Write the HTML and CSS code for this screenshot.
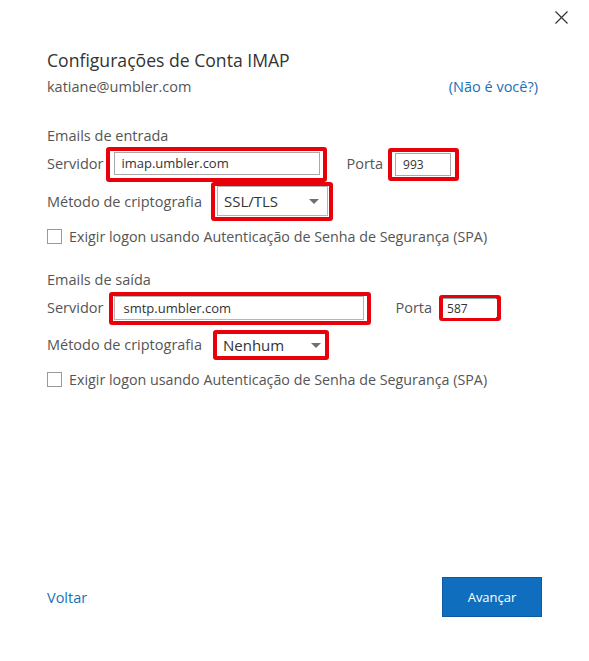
FILE: index.html
```html
<!DOCTYPE html>
<html lang="pt">
<head>
<meta charset="utf-8">
<title>Configurações de Conta IMAP</title>
<link rel="stylesheet" href="styles.css">
</head>
<body>
<div class="dialog">
  <div class="topbar">
    <button class="close" aria-label="Fechar">
      <svg width="13" height="13" viewBox="0 0 13 13"><path d="M0.5 0.5L12.5 12.5M12.5 0.5L0.5 12.5" stroke="#333" stroke-width="1.2" fill="none"/></svg>
    </button>
  </div>
  <div class="content">
    <h1 class="title">Configurações de Conta IMAP</h1>
    <div class="account">
      <span class="email">katiane@umbler.com</span>
      <a class="link" href="#">(Não é você?)</a>
    </div>

    <section class="group g1">
      <div class="group-title">Emails de entrada</div>
      <div class="row server-row">
        <span class="label">Servidor</span>
        <div class="hl hl-server1"><div class="input in-server1">imap.umbler.com</div></div>
        <span class="label porta p1">Porta</span>
        <div class="hl hl-port1"><div class="input in-port1">993</div></div>
      </div>
      <div class="row crypt-row">
        <span class="label">Método de criptografia</span>
        <div class="hl hl-select"><div class="select sel1"><span>SSL/TLS</span><span class="arrow"></span></div></div>
      </div>
      <label class="check-row">
        <span class="checkbox"></span>
        <span class="check-text">Exigir logon usando Autenticação de Senha de Segurança (SPA)</span>
      </label>
    </section>

    <section class="group g2">
      <div class="group-title">Emails de saída</div>
      <div class="row server-row">
        <span class="label">Servidor</span>
        <div class="hl hl-server2"><div class="input in-server2">smtp.umbler.com</div></div>
        <span class="label porta p2">Porta</span>
        <div class="hl hl-port2"><div class="input in-port2">587</div></div>
      </div>
      <div class="row crypt-row crypt2">
        <span class="label">Método de criptografia</span>
        <div class="hl hl-select2"><div class="select sel2"><span>Nenhum</span><span class="arrow"></span></div></div>
      </div>
      <label class="check-row">
        <span class="checkbox"></span>
        <span class="check-text">Exigir logon usando Autenticação de Senha de Segurança (SPA)</span>
      </label>
    </section>
  </div>
  <div class="footer">
    <a class="link back" href="#">Voltar</a>
    <button class="primary">Avançar</button>
  </div>
</div>
</body>
</html>
```

FILE: styles.css
```css
* { box-sizing: border-box; }
html, body { margin: 0; padding: 0; background: #fff; }
body {
  font-family: "Open Sans", "Noto Sans", "Liberation Sans", sans-serif;
  color: #444;
  width: 589px;
  height: 661px;
  overflow: hidden;
}
.dialog { height: 661px; display: flex; flex-direction: column; }
.topbar { height: 38px; display: flex; justify-content: flex-end; align-items: flex-start; padding: 11px 21px 0 0; }
.close { border: 0; background: none; padding: 0; width: 13px; height: 13px; display: block; cursor: pointer; }
.close svg { display: block; }

.content { padding: 0 51px 0 47px; flex: 1; }
.title { margin: 10px 0 0; font-size: 17.6px; font-weight: 400; color: #333; line-height: 24px; }
.account { display: flex; justify-content: space-between; margin-top: 5px; line-height: 20px; font-size: 14.5px; }
.email { color: #555; }
.link { color: #1b6fb8; text-decoration: none; }

.group-title { font-size: 14.5px; color: #555; line-height: 20px; }
.g1 { margin-top: 29px; }
.g2 { margin-top: 19px; }
.row { display: flex; align-items: center; }
.label { font-size: 14.5px; color: #555; line-height: 20px; }

.hl { border: 4px solid #e8000b; border-radius: 3px; display: flex; align-items: center; }
.input { border: 1px solid #a9a9a9; background: #fff; color: #333; display: flex; align-items: center; }

.server-row { height: 36px; }
.hl-server1 { margin-left: 3px; width: 221px; height: 35px; padding: 1px 3px 3px 4px; }
.in-server1 { width: 206px; height: 23px; font-size: 13px; padding-left: 6px; }
.p1 { margin-left: 19px; }
.hl-port1 { margin-left: 5px; width: 71px; height: 33px; padding: 1px 4px 1px 3px; }
.in-port1 { width: 56px; height: 23px; font-size: 12px; padding-left: 7px; }

.hl-server2 { margin-left: 6px; width: 262px; height: 33px; padding: 0 3px 1px 1px; }
.in-server2 { width: 254px; height: 24px; font-size: 13px; padding-left: 8px; border-color: #b5b5b5; }
.p2 { margin-left: 24px; }
.hl-port2 { margin-left: 7px; width: 62px; height: 26px; padding: 0 1px 0 0; }
.in-port2 { width: 55px; height: 20px; font-size: 12px; padding-left: 4px; border-color: #8aa; border-width: 1px 0 0 0; }

.crypt-row { height: 39px; }
.crypt2 { height: 38px; }
.hl-select { margin-left: 9px; width: 122px; height: 39px; padding: 0 1px 1px 2px; }
.hl-select2 { margin-left: 11px; width: 116px; height: 30px; padding: 0 1px 0 1px; }
.select { border: 1px solid #b3b3b3; height: 30px; width: 111px; display: flex; align-items: center; justify-content: space-between; padding: 0 8px 0 6px; font-size: 15px; color: #333; }
.sel2 { border: 0; height: 22px; width: 110px; padding: 0 3px 0 5px; }
.arrow { width: 0; height: 0; border-left: 5px solid transparent; border-right: 5px solid transparent; border-top: 5px solid #707070; }

.check-row { display: flex; align-items: center; height: 30px; }
.checkbox { width: 15px; height: 15px; border: 1px solid #9a9a9a; background: #fff; flex: none; }
.check-text { margin-left: 7px; font-size: 14.3px; color: #555; }

.footer { display: flex; justify-content: space-between; align-items: center; padding: 0 47px 44px 47px; }
.back { font-size: 14.5px; }
.primary { width: 100px; height: 40px; background: #106ebe; border: 1px solid #0d5aa0; color: #fff; font-family: inherit; font-size: 13px; cursor: pointer; }
```
